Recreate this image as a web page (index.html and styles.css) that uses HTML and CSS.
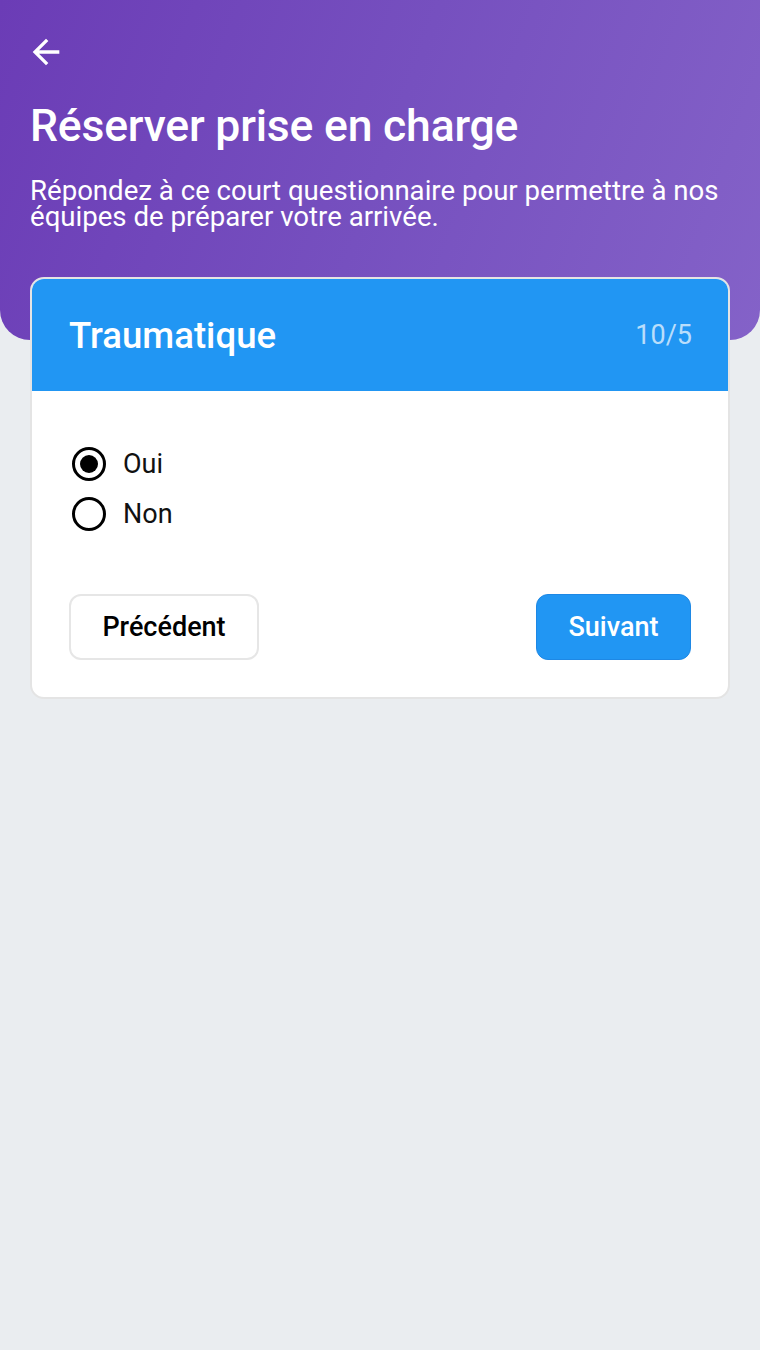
FILE: index.html
```html
<!DOCTYPE html>
<html lang="fr">
<head>
  <meta charset="UTF-8" />
  <meta name="viewport" content="width=device-width, initial-scale=1.0"/>
  <title>Réserver prise en charge</title>
  <link rel="stylesheet" href="styles.css">
</head>
<body>

<header class="hero">
  <button class="back" aria-label="Retour">
    <svg width="40" height="40" viewBox="0 0 24 24" fill="#fff">
      <path d="M20 11H7.83l5.59-5.59L12 4l-8 8 8 8 1.41-1.41L7.83 13H20v-2z"/>
    </svg>
  </button>
  <h1>Réserver prise en charge</h1>
  <p class="intro">Répondez à ce court questionnaire pour permettre à nos équipes de préparer votre arrivée.</p>
</header>

<main class="card">
  <div class="card-head">
    <span class="card-title">Traumatique</span>
    <span class="step">10/5</span>
  </div>
  <div class="card-body">
    <label class="choice">
      <input type="radio" name="trauma" checked>
      <span class="dot"></span>
      Oui
    </label>
    <label class="choice">
      <input type="radio" name="trauma">
      <span class="dot"></span>
      Non
    </label>

    <div class="actions">
      <button class="btn prev">Précédent</button>
      <button class="btn next">Suivant</button>
    </div>
  </div>
</main>

</body>
</html>
```

FILE: styles.css
```css
body {
  margin: 0;
  background: #eaedf0;
  font-family: Roboto, "Noto Sans", sans-serif;
  min-height: 1350px;
}

.hero {
  background: linear-gradient(110deg, #6b3cb6 0%, #7650bf 50%, #8462c8 100%);
  color: #fff;
  height: 340px;
  border-radius: 0 0 30px 30px;
  padding: 32px 30px 0;
  box-sizing: border-box;
}

.back {
  background: none;
  border: none;
  padding: 0;
  margin: 0 0 0 -4px;
  display: block;
  height: 40px;
  cursor: pointer;
}

h1 {
  font-size: 44.5px;
  font-weight: 500;
  margin: 28px 0 0;
  line-height: 52px;
  letter-spacing: -0.2px;
}

.intro {
  font-size: 27.6px;
  line-height: 26px;
  margin: 26px 0 0;
}

.card {
  display: block;
  margin: -63px 30px 0;
  background: #fff;
  border: 2px solid #e4e4e4;
  border-radius: 14px;
  overflow: hidden;
  position: relative;
}

.card-head {
  background: #2196f3;
  height: 112px;
  display: flex;
  align-items: center;
  justify-content: space-between;
  padding: 0 36px 0 37px;
  color: #fff;
}

.card-title {
  font-size: 36.6px;
  font-weight: 500;
}

.step {
  font-size: 27px;
  color: rgba(255, 255, 255, 0.7);
}

.card-body {
  padding: 48px 37px 37px;
}

.choice {
  display: flex;
  align-items: center;
  gap: 17px;
  font-size: 27px;
  height: 50px;
  color: #111;
  cursor: pointer;
}

.choice input {
  display: none;
}

.dot {
  width: 28px;
  height: 28px;
  border: 3px solid #000;
  border-radius: 50%;
  margin-left: 3px;
  position: relative;
}

.choice input:checked + .dot::after {
  content: "";
  position: absolute;
  inset: 5px;
  background: #000;
  border-radius: 50%;
}

.actions {
  display: flex;
  justify-content: space-between;
  margin-top: 55px;
}

.btn {
  font-family: inherit;
  font-size: 27px;
  font-weight: 500;
  height: 66px;
  border-radius: 12px;
  cursor: pointer;
}

.prev {
  background: #fff;
  border: 2px solid #e6e6e6;
  color: #000;
  width: 190px;
}

.next {
  background: #2196f3;
  border: 1px solid #1e88e5;
  color: #fff;
  width: 155px;
}
```
